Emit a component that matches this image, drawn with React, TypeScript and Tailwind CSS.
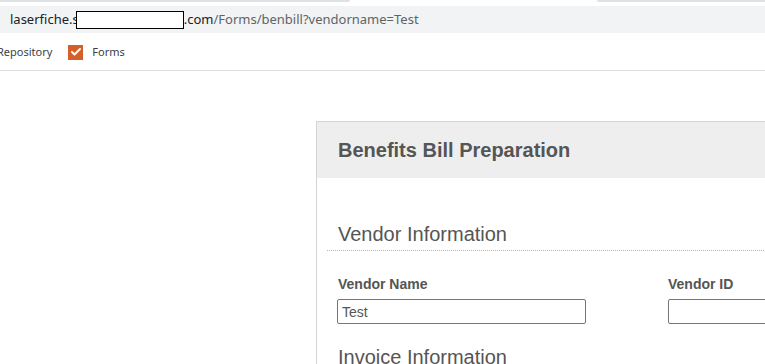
import { Check } from 'lucide-react';

export default function App() {
  return (
    <div className="w-[765px] h-[364px] overflow-hidden bg-white">
      {/* browser chrome */}
      <div className="flex h-[2px]">
        <div className="w-[350px] bg-[#dee1e6] rounded-br-[3px]" />
        <div className="flex-1" />
        <div className="w-[168px] bg-[#dee1e6] rounded-bl-[3px]" />
      </div>
      <div className="h-[4px]" />
      <div className="h-[27px] bg-[#f1f3f4] flex items-center pl-[10px] text-[13px] text-[#202124]" style={{ fontFamily: '"Noto Sans", sans-serif' }}>
        <span>laserfiche.s</span>
        <span className="w-[108px] h-[18px] bg-white border border-black -ml-[3px]" />
        <span>.com</span>
        <span className="text-[#5f6368]">/Forms/benbill?vendorname=Test</span>
      </div>
      <div className="h-[38px] border-b border-[#dadce0] flex items-center pt-[1px] text-[11px] text-[#3c4043]" style={{ fontFamily: '"Noto Sans", sans-serif' }}>
        <span className="-ml-[3px]">Repository</span>
        <span className="ml-[16px] w-[15px] h-[15px] bg-[#d35f2a] flex items-center justify-center">
          <Check className="w-[12px] h-[12px] text-white" strokeWidth={4} />
        </span>
        <span className="ml-[9px]">Forms</span>
      </div>

      {/* form */}
      <div className="pt-[50px] pl-[316px]" style={{ fontFamily: '"Liberation Sans", Arial, sans-serif' }}>
        <div className="border border-[#d4d4d4] border-r-0 w-[620px]">
          <div className="h-[56px] bg-[#eeeeee] flex items-center pl-[21px]">
            <h1 className="text-[20px] leading-[24px] font-bold text-[#555555]">Benefits Bill Preparation</h1>
          </div>
          <div className="pl-[10px] pt-[44px]">
            <div className="text-[20px] leading-[24px] text-[#555555] pl-[11px] pb-[4px] border-b border-dotted border-[#b5b5b5]">Vendor Information</div>
            <div className="flex pl-[11px] pt-[25px]">
              <div className="w-[330px]">
                <div className="text-[14px] leading-[16px] font-bold text-[#555555] mb-[7px]">Vendor Name</div>
                <input
                  readOnly
                  value="Test"
                  className="-ml-[1px] w-[249px] h-[25px] border border-[#767676] rounded-[2px] px-[4px] text-[14px] text-[#555555] outline-none"
                />
              </div>
              <div>
                <div className="text-[14px] leading-[16px] font-bold text-[#555555] mb-[7px]">Vendor ID</div>
                <input readOnly className="w-[249px] h-[25px] border border-[#767676] rounded-[2px] outline-none" />
              </div>
            </div>
            <div className="text-[20px] leading-[24px] text-[#555555] pl-[11px] pt-[21px]">Invoice Information</div>
          </div>
        </div>
      </div>
    </div>
  );
}
